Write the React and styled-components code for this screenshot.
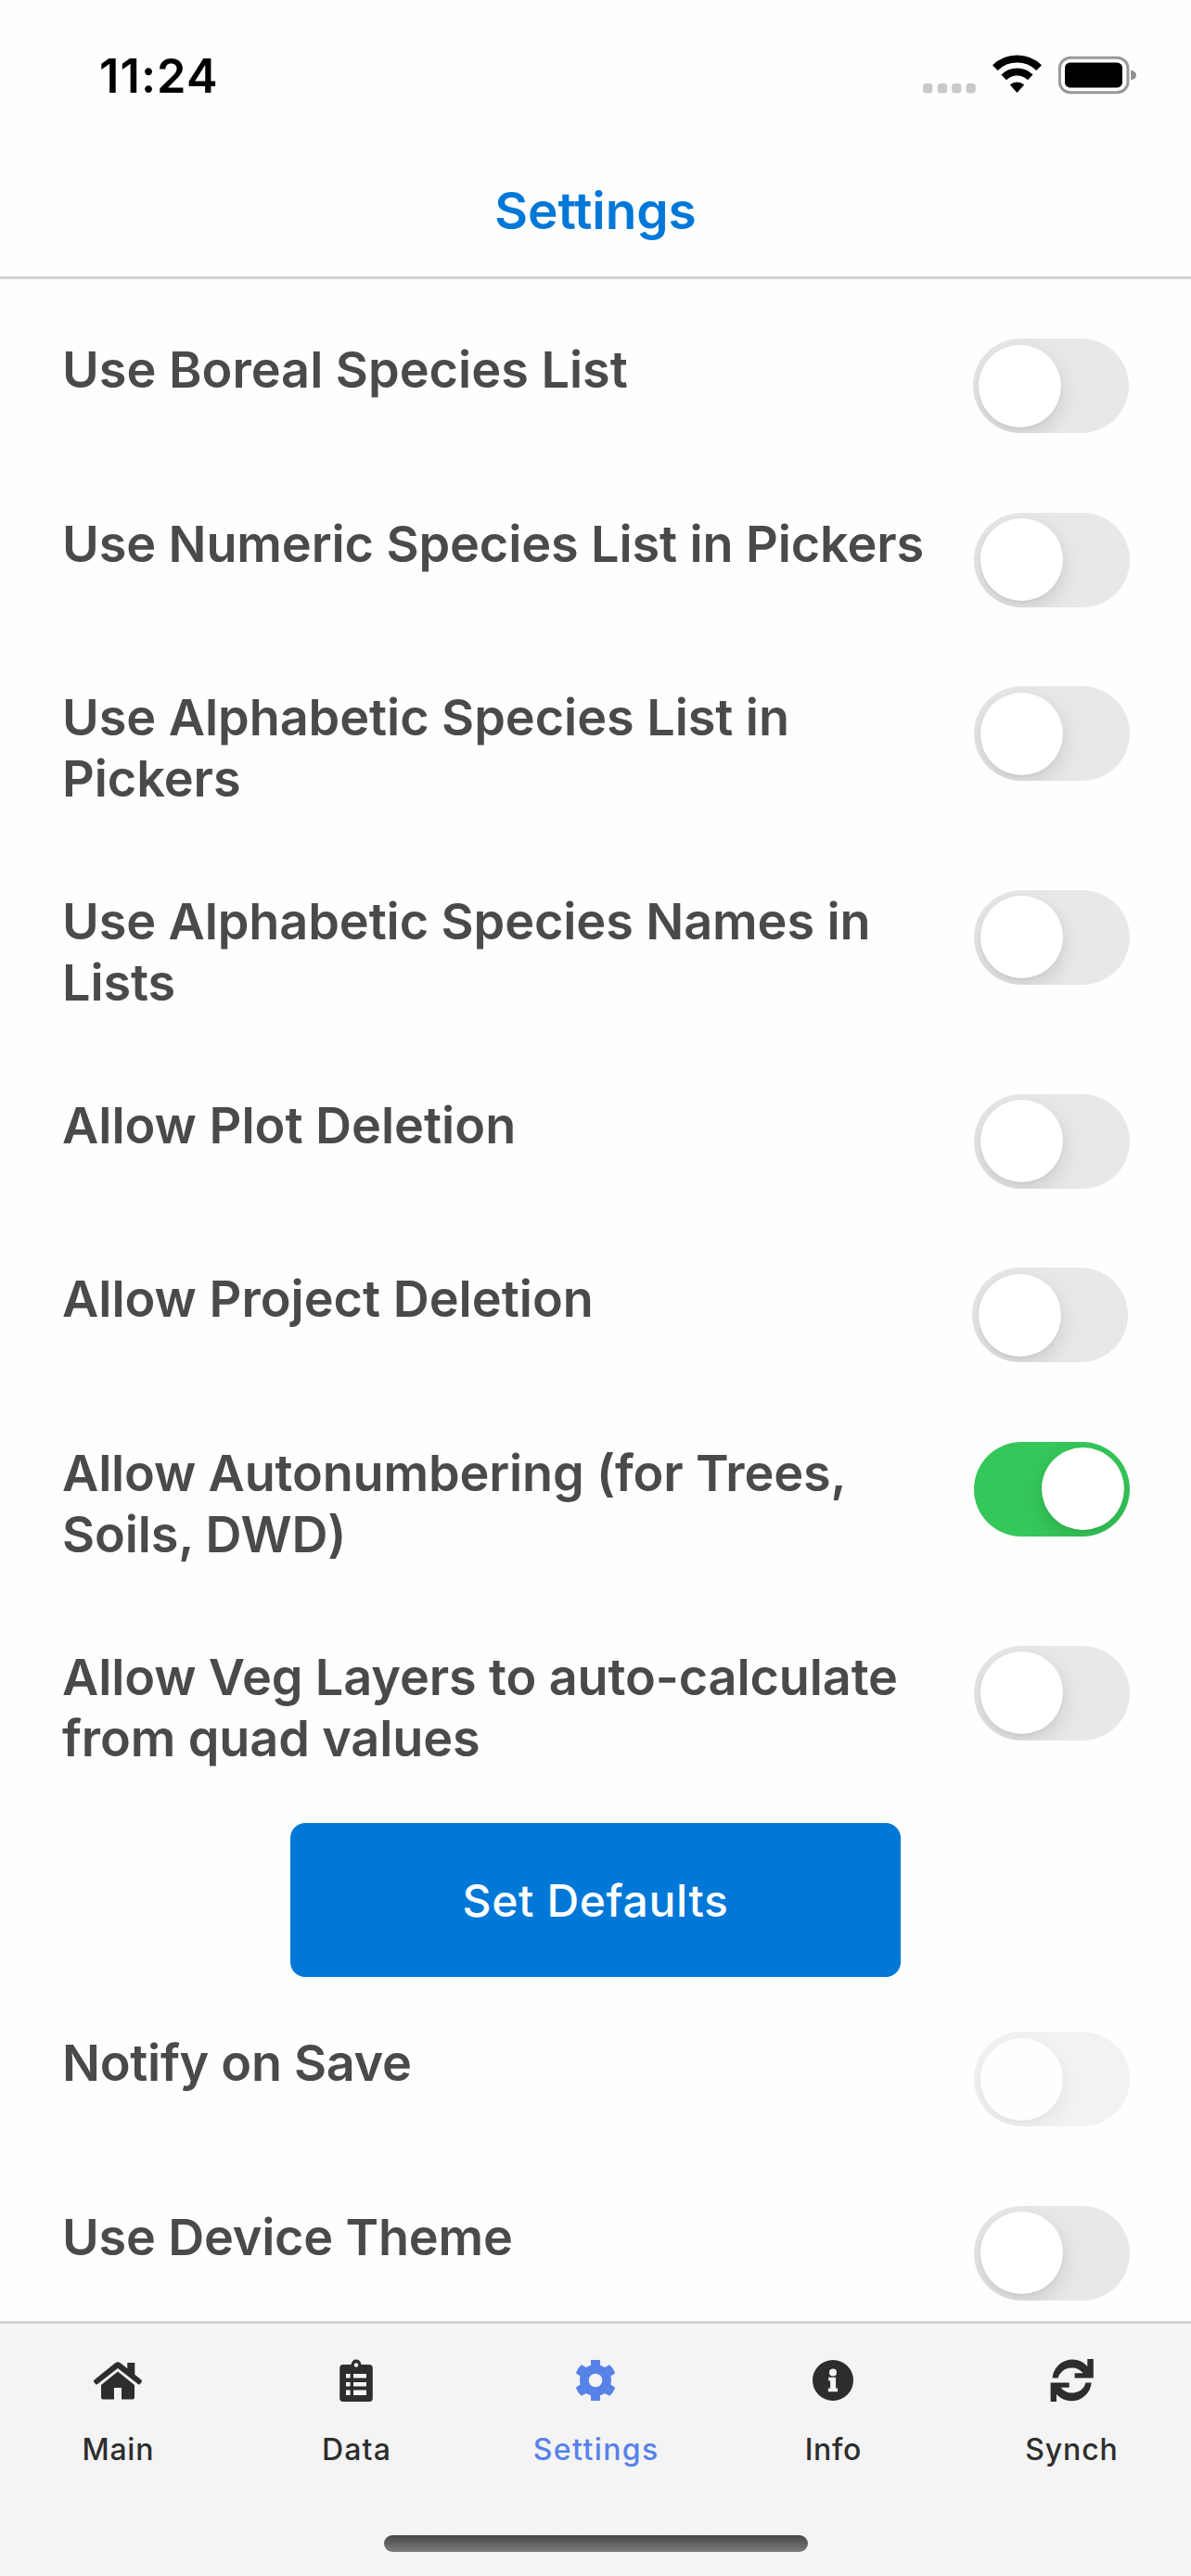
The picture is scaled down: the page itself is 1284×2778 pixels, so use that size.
import React, { useState } from 'react';
import styled, { createGlobalStyle } from 'styled-components';

const GlobalStyle = createGlobalStyle`
  * { box-sizing: border-box; }
  html, body { margin: 0; padding: 0; background: #fefefe; }
  body { font-family: Inter, Roboto, "Liberation Sans", sans-serif; -webkit-font-smoothing: antialiased; }
`;

const Screen = styled.div`
  width: 1284px;
  height: 2778px;
  display: flex;
  flex-direction: column;
  background: #fefefe;
  overflow: hidden;
`;

const StatusBar = styled.div`
  height: 162px;
  flex: none;
  padding: 51px 59px 0 107px;
  display: flex;
  justify-content: space-between;
  align-items: flex-start;
`;

const Clock = styled.div`
  font-size: 50.5px;
  line-height: 62px;
  font-weight: 600;
  letter-spacing: 1.1px;
  color: #000;
`;

const StatusIcons = styled.svg`
  display: block;
  width: 232px;
  height: 62px;
`;

const Header = styled.header`
  height: 139px;
  flex: none;
  padding-top: 33px;
  border-bottom: 3px solid #d3d3d3;
  text-align: center;
`;

const Title = styled.h1`
  margin: 0;
  font-size: 55px;
  line-height: 64px;
  font-weight: 600;
  letter-spacing: -0.1px;
  color: #0078d7;
`;

const List = styled.main`
  flex: 1;
  min-height: 0;
  overflow: hidden;
  padding-top: 40px;
`;

const Row = styled.div`
  height: ${(p) => (p.$lines === 2 ? 219.6 : 187.7)}px;
  padding: 24px 66px 0 67px;
  display: flex;
  justify-content: space-between;
  align-items: flex-start;
`;

const Label = styled.div`
  width: 950px;
  margin-top: 1px;
  font-size: 54px;
  line-height: 66px;
  font-weight: 600;
  letter-spacing: ${(p) => p.$tracking}px;
  color: #4a4a4a;
  white-space: pre-line;
`;

const Track = styled.button`
  flex: none;
  width: 168px;
  height: 102px;
  padding: 6.5px;
  margin-right: ${(p) => (p.$shift ? p.$shift : 0)}px;
  border: 0;
  border-radius: 51px;
  overflow: hidden;
  display: flex;
  justify-content: ${(p) => (p.$on ? 'flex-end' : 'flex-start')};
  background: ${(p) => (p.$on ? '#35c759' : '#e8e8ea')};
  opacity: ${(p) => (p.$dim ? 0.5 : 1)};
`;

const Thumb = styled.span`
  width: 89px;
  height: 89px;
  border-radius: 50%;
  background: #fff;
  box-shadow: 0 8px 22px rgba(0, 0, 0, 0.13), 0 2px 3px rgba(0, 0, 0, 0.04);
`;

const DefaultsArea = styled.div`
  height: 201px;
  margin-top: -4px;
  display: flex;
  justify-content: center;
  align-items: flex-start;
`;

const DefaultsButton = styled.button`
  width: 658px;
  height: 166px;
  padding: 0;
  border: 0;
  border-radius: 16px;
  background: #0078d7;
  color: #fff;
  font-family: inherit;
  font-size: 48px;
  font-weight: 550;
  letter-spacing: 0.65px;
`;

const TabBar = styled.nav`
  height: 275px;
  flex: none;
  border-top: 3px solid #d3d3d3;
  background: #f4f4f4;
  display: flex;
  flex-direction: column;
  align-items: center;
`;

const Tabs = styled.div`
  width: 1284px;
  height: 228px;
  padding-top: 35px;
  display: grid;
  grid-template-columns: 254px 260px 256px 256px 258px;
`;

const Tab = styled.div`
  display: flex;
  flex-direction: column;
  align-items: center;
  gap: 27px;
  color: ${(p) => (p.$active ? '#5782e8' : '#2d2d2d')};
`;

const TabIcon = styled.svg`
  display: block;
  width: 56px;
  height: 54px;
`;

const TabLabel = styled.span`
  font-size: 32px;
  line-height: 40px;
  font-weight: 500;
  letter-spacing: ${(p) => p.$tracking}px;
  margin-right: -${(p) => p.$tracking}px;
`;

const HomeIndicator = styled.div`
  width: 457px;
  height: 18px;
  border-radius: 9px;
  background: linear-gradient(#474747, #7c7c7c);
`;

function StatusGlyphs() {
  return (
    <StatusIcons viewBox="0 0 232 62">
      {[2, 17.7, 33, 48.4].map((x) => (
        <rect key={x} x={x} y="39" width="10.4" height="10.4" rx="3.4" fill="#c9c9c9" />
      ))}
      <g fill="none" stroke="#000" strokeWidth="8">
        <path d="M79.8 22.2a34 34 0 0 1 47.4 0" />
        <path d="M89.2 32.4a20.5 20.5 0 0 1 28.6 0" />
      </g>
      <path d="M95.8 40.6a11.3 11.3 0 0 1 15.4 0l-7.7 8.3z" fill="#000" />
      <rect x="149.4" y="11.2" width="73.6" height="37.6" rx="11.5" fill="none" stroke="#999" strokeWidth="3" />
      <rect x="155" y="16.6" width="62" height="26.8" rx="5.5" fill="#000" />
      <path d="M226.2 24.5q5.8 1.5 5.8 5.5t-5.8 5.5z" fill="#8f8f8f" />
    </StatusIcons>
  );
}

function HomeGlyph() {
  return (
    <TabIcon viewBox="0 0 56 54" fill="currentColor">
      <path d="M2.6 25.6 25.200 7.200q2.800-2 5.600 0L38.300 13.300V7H46.300V19.800L53.400 25.600q1.200 1 .2 2.300l-1.600 2q-1 1.100-2.200.2L28 13 6.200 30.100q-1.200.9-2.200-.2l-1.600-2q-1-1.300.2-2.300z" />
      <path d="M28 16.600 10 31v13.600q0 2 2 2h12V34h8v12.600h12q2 0 2-2V31z" />
    </TabIcon>
  );
}

function ClipboardGlyph() {
  return (
    <TabIcon viewBox="0 0 56 54" fill="currentColor">
      <path
        fillRule="evenodd"
        d="M14 9h8.500q.9-5.600 5.500-5.600T33.500 9H42q3.800 0 3.800 3.800v32.400q0 3.800-3.800 3.800H14q-3.800 0-3.800-3.800V12.800Q10.200 9 14 9zm14-1.700a2.200 2.200 0 1 0 0 4.400 2.200 2.200 0 0 0 0-4.400zM17 19v4.400h4.600V19zm8 0v4.400h14V19zm-8 9v4.400h4.600V28zm8 0v4.400h14V28zm-8 8.500V42h4.600v-5.500zm8 0V42h14v-5.500z"
      />
    </TabIcon>
  );
}

function GearGlyph() {
  return (
    <TabIcon viewBox="0 0 56 54" fill="currentColor">
      <path
        fillRule="evenodd"
        d="M23 4h10v5.800q2.800.8 5 2.300l5.200-2.900q4.300 3.500 6 9L44.400 21.600q.6 2.600.6 4.400t-.6 4.400l4.800 3.400q-1.700 5.500-6 9L38 39.900q-2.200 1.500-5 2.300V48H23v-5.800q-2.800-.8-5-2.300l-5.200 2.900q-4.300-3.500-6-9l4.800-3.400Q11 27.800 11 26t.6-4.400L6.800 18.200q1.700-5.500 6-9l5.200 2.900q2.200-1.500 5-2.300zM28 18.700a7.300 7.300 0 1 0 0 14.600 7.300 7.300 0 0 0 0-14.600z"
      />
    </TabIcon>
  );
}

function InfoGlyph() {
  return (
    <TabIcon viewBox="0 0 56 54">
      <circle cx="28" cy="26" r="22" fill="currentColor" />
      <g fill="#f4f4f4">
        <circle cx="28" cy="17.600" r="4" />
        <path d="M23.200 22.700h7.900v11.800h2v3.700H22.900v-3.700h2.200v-8.100h-1.900z" />
      </g>
    </TabIcon>
  );
}

function SyncGlyph() {
  return (
    <TabIcon viewBox="0 0 56 54" fill="currentColor">
      <path d="M7.600 23.600A21.500 21.500 0 0 1 45.300 11V2.900H51.800V23.600H31.600V18.200H40.600A15.600 15.600 0 0 0 13.600 23.600z" />
      <path d="M49.600 28.400A21.500 21.500 0 0 1 12 41V49.100H5.600V28.400H25.700V33.800H16.600A15.600 15.600 0 0 0 43.600 28.400z" />
    </TabIcon>
  );
}

const speciesAndPlot = [
  { label: 'Use Boreal Species List', shift: 1.5 },
  { label: 'Use Numeric Species List in Pickers', tracking: -0.11 },
  { label: 'Use Alphabetic Species List in\nPickers', lines: 2, tracking: -0.06 },
  { label: 'Use Alphabetic Species Names in\nLists', lines: 2, tracking: -0.1 },
  { label: 'Allow Plot Deletion' },
  { label: 'Allow Project Deletion', shift: 2 },
  { label: 'Allow Autonumbering (for Trees,\nSoils, DWD)', lines: 2, on: true, tracking: -0.16 },
  { label: 'Allow Veg Layers to auto-calculate\nfrom quad values', lines: 2, tracking: -0.12 },
];

const general = [
  { label: 'Notify on Save', dim: true, tracking: -0.3 },
  { label: 'Use Device Theme', tracking: -0.2 },
];

function SettingRow({ label, lines = 1, on = false, dim, shift, tracking = 0 }) {
  const [checked, setChecked] = useState(on);
  return (
    <Row $lines={lines}>
      <Label $tracking={tracking}>{label}</Label>
      <Track
        role="switch"
        aria-checked={checked}
        disabled={dim}
        $on={checked}
        $dim={dim}
        $shift={shift}
        onClick={() => setChecked(!checked)}
      >
        <Thumb />
      </Track>
    </Row>
  );
}

const tabs = [
  { name: 'Main', Glyph: HomeGlyph, tracking: 0.7 },
  { name: 'Data', Glyph: ClipboardGlyph, tracking: 1.2 },
  { name: 'Settings', Glyph: GearGlyph, tracking: 1.4 },
  { name: 'Info', Glyph: InfoGlyph, tracking: 0.7 },
  { name: 'Synch', Glyph: SyncGlyph, tracking: 0.9 },
];

export default function App() {
  return (
    <>
      <GlobalStyle />
      <Screen>
        <StatusBar>
          <Clock>11:24</Clock>
          <StatusGlyphs />
        </StatusBar>
        <Header>
          <Title>Settings</Title>
        </Header>
        <List>
          {speciesAndPlot.map((item) => (
            <SettingRow key={item.label} {...item} />
          ))}
          <DefaultsArea>
            <DefaultsButton>Set Defaults</DefaultsButton>
          </DefaultsArea>
          {general.map((item) => (
            <SettingRow key={item.label} {...item} />
          ))}
        </List>
        <TabBar>
          <Tabs>
            {tabs.map(({ name, Glyph, tracking }) => (
              <Tab key={name} $active={name === 'Settings'}>
                <Glyph />
                <TabLabel $tracking={tracking}>{name}</TabLabel>
              </Tab>
            ))}
          </Tabs>
          <HomeIndicator />
        </TabBar>
      </Screen>
    </>
  );
}
